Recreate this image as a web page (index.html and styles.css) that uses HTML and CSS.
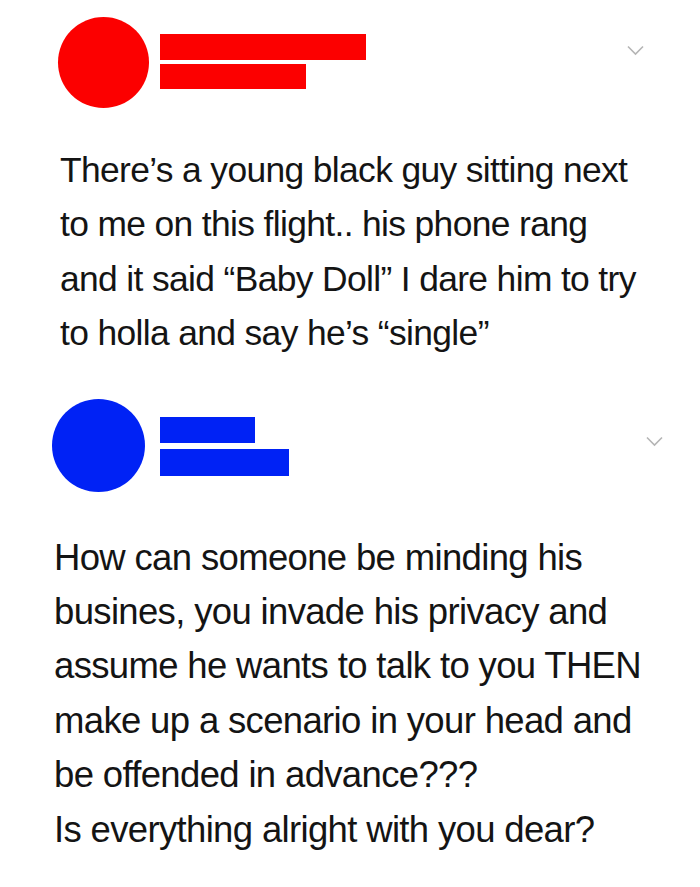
FILE: index.html
```html
<!DOCTYPE html>
<html>
<head>
<meta charset="utf-8">
<link rel="stylesheet" href="styles.css">
</head>
<body>
<div class="post post-one">
  <div class="head">
    <div class="avatar"></div>
    <div class="names">
      <div class="bar bar-a"></div>
      <div class="bar bar-b"></div>
    </div>
    <svg class="chev" width="17" height="11" viewBox="0 0 17 11"><path d="M1 1.5 L8.5 9 L16 1.5" fill="none" stroke="#b5b5b5" stroke-width="1.6"/></svg>
  </div>
  <p class="text">There’s a young black guy sitting next<br>to me on this flight.. his phone rang<br>and it said “Baby Doll” I dare him to try<br>to holla and say he’s “single”</p>
</div>
<div class="post post-two">
  <div class="head">
    <div class="avatar"></div>
    <div class="names">
      <div class="bar bar-a"></div>
      <div class="bar bar-b"></div>
    </div>
    <svg class="chev" width="17" height="11" viewBox="0 0 17 11"><path d="M1 1.5 L8.5 9 L16 1.5" fill="none" stroke="#b5b5b5" stroke-width="1.6"/></svg>
  </div>
  <p class="text">How can someone be minding his<br>busines, you invade his privacy and<br>assume he wants to talk to you THEN<br>make up a scenario in your head and<br>be offended in advance???<br>Is everything alright with you dear?</p>
</div>
</body>
</html>
```
FILE: styles.css
```css
html, body {
  margin: 0;
  padding: 0;
  background: #ffffff;
}
body {
  width: 700px;
  height: 887px;
  overflow: hidden;
  font-family: "Liberation Sans", Arial, sans-serif;
  color: #141414;
}
.post-one {
  padding: 17px 0 0 58px;
}
.post-two {
  padding: 38px 0 0 52px;
}
.head {
  display: flex;
  align-items: flex-start;
}
.avatar {
  border-radius: 50%;
  flex: none;
}
.post-one .avatar {
  width: 91px;
  height: 91px;
  background: #fc0000;
}
.post-two .avatar {
  width: 93px;
  height: 93px;
  background: #0022f5;
}
.names {
  display: flex;
  flex-direction: column;
}
.post-one .names {
  margin: 17px 0 0 11px;
  gap: 4px;
}
.post-two .names {
  margin: 18px 0 0 15px;
  gap: 6px;
}
.bar {
  flex: none;
}
.post-one .bar { background: #fc0000; }
.post-two .bar { background: #0022f5; }
.post-one .bar-a { width: 206px; height: 26px; }
.post-one .bar-b { width: 146px; height: 25px; }
.post-two .bar-a { width: 95px; height: 26px; }
.post-two .bar-b { width: 129px; height: 27px; }
.chev {
  margin-left: auto;
  flex: none;
}
.post-one .chev {
  margin-top: 28px;
  margin-right: 56px;
}
.post-two .chev {
  margin-top: 37px;
  margin-right: 37px;
}
.text {
  margin: 0;
  line-height: 54.4px;
  letter-spacing: -0.018em;
}
.post-one .text {
  font-size: 35.4px;
  margin-top: 35px;
  padding-left: 2px;
}
.post-two .text {
  font-size: 36.5px;
  margin-top: 39px;
  padding-left: 2px;
}
```
